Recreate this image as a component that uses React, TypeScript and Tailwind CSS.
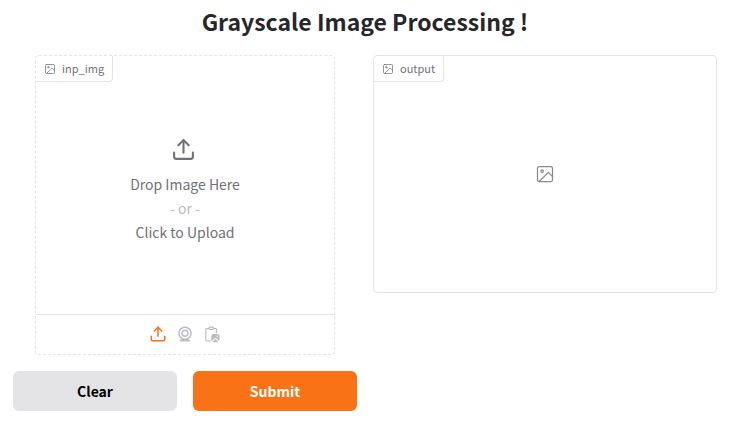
import type { ReactNode } from "react";

function UploadIcon({ className }: { className: string }) {
  return (
    <svg
      className={className}
      viewBox="0 0 24 24"
      fill="none"
      stroke="currentColor"
      strokeWidth="2"
      strokeLinecap="round"
      strokeLinejoin="round"
      aria-hidden="true"
    >
      <path d="M21 15v4a2 2 0 0 1-2 2H5a2 2 0 0 1-2-2v-4" />
      <polyline points="17 8 12 3 7 8" />
      <line x1="12" y1="3" x2="12" y2="15" />
    </svg>
  );
}

function ImageIcon({ className }: { className: string }) {
  return (
    <svg
      className={className}
      viewBox="0 0 24 24"
      fill="none"
      stroke="currentColor"
      strokeWidth="1.5"
      strokeLinecap="round"
      strokeLinejoin="round"
      aria-hidden="true"
    >
      <rect x="3" y="3" width="18" height="18" rx="2" ry="2" />
      <circle cx="8.5" cy="8.5" r="1.5" />
      <polyline points="21 15 16 10 5 21" />
    </svg>
  );
}

function WebcamIcon({ className }: { className: string }) {
  return (
    <svg className={className} viewBox="0 0 24 24" fill="currentColor" aria-hidden="true">
      <path d="M12 2c-4.963 0-9 4.038-9 9c0 3.328 1.82 6.232 4.513 7.79l-2.067 1.378A1 1 0 0 0 6 22h12a1 1 0 0 0 .555-1.832l-2.067-1.378C19.18 17.232 21 14.328 21 11c0-4.962-4.037-9-9-9zm0 16c-3.859 0-7-3.141-7-7c0-3.86 3.141-7 7-7s7 3.14 7 7c0 3.859-3.141 7-7 7z" />
      <path d="M12 6c-2.757 0-5 2.243-5 5s2.243 5 5 5s5-2.243 5-5s-2.243-5-5-5zm0 8c-1.654 0-3-1.346-3-3s1.346-3 3-3s3 1.346 3 3s-1.346 3-3 3z" />
    </svg>
  );
}

function PasteIcon({ className }: { className: string }) {
  return (
    <svg className={className} viewBox="0 0 24 24" fill="currentColor" aria-hidden="true">
      <path d="M12.75 2a2.25 2.25 0 0 1 2.236 2h1.764A2.25 2.25 0 0 1 19 6.25V11h-1.5V6.25a.75.75 0 0 0-.75-.75h-2.129c-.404.603-1.091 1-1.871 1h-3.5c-.78 0-1.467-.397-1.871-1H5.25a.75.75 0 0 0-.75.75v13.5c0 .414.336.75.75.75h4.78a4 4 0 0 0 .505 1.5H5.25A2.25 2.25 0 0 1 3 19.75V6.25A2.25 2.25 0 0 1 5.25 4h1.764a2.25 2.25 0 0 1 2.236-2zM12.75 3.5h-3.5a.75.75 0 0 0 0 1.5h3.5a.75.75 0 0 0 0-1.5" />
      <path d="M14 12a3 3 0 0 0-3 3v5c0 .556.151 1.077.415 1.524l3.494-3.494a2.25 2.25 0 0 1 3.182 0l3.494 3.494c.264-.447.415-.968.415-1.524v-5a3 3 0 0 0-3-3zm0 11a3 3 0 0 1-1.524-.415l3.494-3.494a.75.75 0 0 1 1.06 0l3.494 3.494A3 3 0 0 1 19 23zm5-7a1 1 0 1 1 0-2 1 1 0 0 1 0 2" />
    </svg>
  );
}

function BlockLabel({ children }: { children: ReactNode }) {
  return (
    <div className="flex h-[26px] items-center gap-1.5 self-start rounded-br-sm border-r border-b border-[#e4e4e7] px-2 text-[11px] leading-4 text-[#71717a]">
      <ImageIcon className="size-3" />
      <span className="pb-0.5">{children}</span>
    </div>
  );
}

export default function App() {
  return (
    <main className="bg-white pt-1 pr-[14px] pb-3 pl-[13px] font-['Noto_Sans_CJK_SC','Noto_Sans',sans-serif]">
      <h1 className="mb-4 text-center text-[23px] leading-[35px] font-bold text-[#27272a]">
        Grayscale Image Processing !
      </h1>
      <div className="grid grid-cols-2 items-start gap-4">
        <div className="flex flex-col gap-4">
          <section className="mx-auto flex aspect-square w-full max-w-[300px] flex-col rounded-sm border border-dashed border-[#e4e4e7]">
            <BlockLabel>inp_img</BlockLabel>
            <button
              type="button"
              className="flex w-full grow flex-col items-center justify-center pb-4 text-sm leading-6 text-[#71717a]"
            >
              <UploadIcon className="mr-1 mb-[10px] size-[25px]" />
              <span>Drop Image Here</span>
              <span className="text-[#bbbbc2]">- or -</span>
              <span>Click to Upload</span>
            </button>
            <div className="flex h-10 items-center justify-center gap-[9px] border-t border-[#e4e4e7] pb-0.5 text-[#bbbbc2]">
              <button type="button" aria-label="Upload file" className="text-[#f97316]">
                <UploadIcon className="size-[18px]" />
              </button>
              <button type="button" aria-label="Capture from camera">
                <WebcamIcon className="size-[18px]" />
              </button>
              <button type="button" aria-label="Paste from clipboard">
                <PasteIcon className="size-[18px]" />
              </button>
            </div>
          </section>
          <div className="grid grid-cols-2 gap-4 text-sm font-bold">
            <button type="button" className="h-10 rounded-md bg-[#e4e4e7] text-black">
              Clear
            </button>
            <button type="button" className="h-10 rounded-md bg-[#f97316] text-white">
              Submit
            </button>
          </div>
        </div>
        <section className="flex h-[238px] flex-col rounded-sm border border-[#e4e4e7]">
          <BlockLabel>output</BlockLabel>
          <div className="flex grow items-center justify-center pb-[26px] text-[#8b8b8f]">
            <ImageIcon className="size-5" />
          </div>
        </section>
      </div>
    </main>
  );
}
